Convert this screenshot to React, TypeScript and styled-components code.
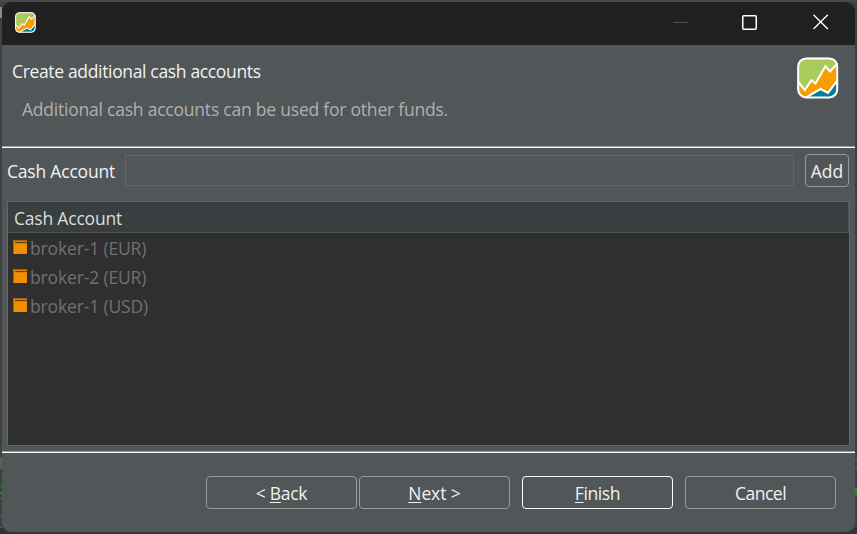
import React from "react";
import styled, { createGlobalStyle } from "styled-components";

const GlobalStyle = createGlobalStyle`
  * { box-sizing: border-box; }
  body { margin: 0; background: #404040; overflow: hidden; }
`;

/* Slivers of the windows behind the dialog show along its edges. */
const Desktop = styled.div`
  width: 857px;
  height: 534px;
  padding: 2px;
  background:
    linear-gradient(#8a8a8a, #8a8a8a) 0 7px / 2px 11px no-repeat,
    linear-gradient(#6b5a48, #6b5a48) 0 457px / 2px 12px no-repeat,
    linear-gradient(#1f8a2a, #1f8a2a) 0 486px / 2px 1px no-repeat,
    linear-gradient(#1f8a2a, #1f8a2a) 0 492px / 2px 2px no-repeat,
    linear-gradient(#1f8a2a, #1f8a2a) 0 498px / 2px 1px no-repeat,
    linear-gradient(#1f8a2a, #1f8a2a) 0 515px / 2px 1px no-repeat,
    linear-gradient(#1f8a2a, #1f8a2a) 0 527px / 2px 1px no-repeat,
    linear-gradient(#80684e, #80684e) 855px 460px / 2px 1px no-repeat,
    linear-gradient(#80684e, #80684e) 855px 468px / 2px 1px no-repeat,
    linear-gradient(#1f8a2a, #1f8a2a) 855px 488px / 2px 7px no-repeat,
    linear-gradient(#484848 0 2px, #404040 2px 528px, #353333 528px);
  font-family: "Open Sans", "Noto Sans", sans-serif;
  font-size: 17.5px;
  line-height: 24px;
  color: #f2f2f2;
`;

const Window = styled.main`
  width: 853px;
  height: 530px;
  display: flex;
  flex-direction: column;
  overflow: hidden;
  border-radius: 9px;
  background: #515658;
`;

const TitleBar = styled.header`
  flex: 0 0 43px;
  display: flex;
  align-items: center;
  justify-content: space-between;
  padding: 0 26px 3px 13px;
  background: #202020;
`;

const WindowControls = styled.div`
  display: flex;
  align-items: center;
  gap: 54px;
  svg:last-child { margin-left: 1px; }
`;

const Label = styled.span<{ $spacing?: number }>`
  display: inline-block;
  white-space: pre;
  letter-spacing: ${(p) => p.$spacing ?? -0.2}px;
`;

const Banner = styled.section`
  flex: 0 0 103px;
  display: flex;
  justify-content: space-between;
  padding: 12px 16px 0 10px;
  border-bottom: 1px solid #fff;
  box-shadow: inset 0 -1px #989a9b;
`;

const BannerText = styled.div`
  padding-top: 2px;
`;

const Title = styled.div`
  height: 24px;
`;

const Description = styled.div`
  margin: 14px 0 0 10px;
  color: #b0b0b0;
`;

const Content = styled.section`
  flex: 0 0 305px;
  padding: 6px 5px 0;
  border-bottom: 1px solid #fff;
  box-shadow: inset 0 -1px #989a9b;
`;

const Field = styled.label`
  display: flex;
  align-items: center;
  height: 33px;
`;

const FieldLabel = styled.span`
  width: 118px;
`;

const Input = styled.input`
  width: 669px;
  height: 31px;
  margin-right: 11px;
  border: 1px solid #646464;
  background: transparent;
  color: inherit;
  font: inherit;
  outline: none;
`;

const Button = styled.button<{ $width: number; $primary?: boolean }>`
  width: ${(p) => p.$width}px;
  height: 33px;
  padding: 0;
  border: 1px solid ${(p) => (p.$primary ? "#fff" : "#999")};
  border-radius: 4px;
  background: transparent;
  color: inherit;
  font: inherit;
  line-height: 24px;
`;

const Table = styled.div`
  width: 843px;
  height: 245px;
  margin-top: 14px;
  border: 1px solid #666;
  background: #2f2f2f;
`;

const TableHeader = styled.div`
  height: 31px;
  padding: 4px 0 0 6px;
  border-bottom: 1px solid #535353;
  border-right: 1px solid #535353;
  background: #393e40;
  color: #dcdcdc;
`;

const Row = styled.div`
  display: flex;
  align-items: center;
  height: 29px;
  padding-left: 5px;
  gap: 3px;
  color: #717171;
  svg { margin-top: -2px; }
`;

const Footer = styled.footer`
  display: flex;
  padding: 23px 0 0 204px;
`;

const Group = styled.div`
  display: flex;
  gap: 2px;
  margin-right: 12px;
  & + & { gap: 12px; }
`;

const Key = styled.span`
  text-decoration: underline;
  text-decoration-thickness: 1px;
  text-underline-offset: 2px;
  text-decoration-skip-ink: none;
`;

const Logo = ({ size }: { size: number }) => (
  <svg width={size} height={size} viewBox="0 0 42 42">
    <clipPath id={`tile${size}`}><rect x=".8" y=".8" width="40" height="40" rx="8" /></clipPath>
    <g clipPath={`url(#tile${size})`}>
      <path fill="#a9cb5d" d="M0 0h42v42H0z" />
      <path fill="#f79d00" stroke="#fff" strokeWidth="2.1" d="M0 23.5L7.8 33L14.5 23.2L18.5 26.5L28.4 9.3L33 14.5L42 5V44H0Z" />
      <path fill="#007d99" stroke="#fff" strokeWidth="2.1" d="M6 43L14 37.5L23.5 32L31 35.8L43 20V44Z" />
    </g>
    <rect x="1.2" y="1.4" width="39" height="39" rx="8" fill="none" stroke="#fff" strokeWidth="2" />
  </svg>
);

const AccountIcon = () => (
  <svg width="14" height="14" viewBox="0 0 14 14">
    <rect width="14" height="14" rx="1" fill="#f28e00" />
    <path d="M0.5 14V.5H14" fill="none" stroke="#a46307" />
    <path d="M2 2.5H14" stroke="#6c4308" strokeWidth="1.3" />
  </svg>
);

const accounts = ["broker-1 (EUR)", "broker-2 (EUR)", "broker-1 (USD)"];

export default function App() {
  return (
    <>
      <GlobalStyle />
      <Desktop>
        <Window>
          <TitleBar>
            <Logo size={21} />
            <WindowControls>
              <svg width="15" height="15"><path d="M0 7.5H15" stroke="#505050" /></svg>
              <svg width="15" height="15"><rect x=".75" y=".75" width="13.5" height="13.5" rx="1" fill="none" stroke="#fff" strokeWidth="1.5" /></svg>
              <svg width="17" height="16"><path d="M1.5 .7L15.8 15M15.8 .7L1.5 15" stroke="#fff" strokeWidth="1.3" /></svg>
            </WindowControls>
          </TitleBar>
          <Banner>
            <BannerText>
              <Title><Label $spacing={-0.34}>Create additional cash accounts</Label></Title>
              <Description><Label $spacing={-0.22}>Additional cash accounts can be used for other funds.</Label></Description>
            </BannerText>
            <Logo size={42} />
          </Banner>
          <Content>
            <Field>
              <FieldLabel><Label>Cash Account</Label></FieldLabel>
              <Input />
              <Button $width={44}><Label $spacing={0}>Add</Label></Button>
            </Field>
            <Table>
              <TableHeader><Label>Cash Account</Label></TableHeader>
              {accounts.map((name) => (
                <Row key={name}><AccountIcon /><Label $spacing={-0.15}>{name}</Label></Row>
              ))}
            </Table>
          </Content>
          <Footer>
            <Group>
              <Button $width={151}><Label $spacing={-0.3}>{"< "}<Key>B</Key>ack</Label></Button>
              <Button $width={151}><Label $spacing={-0.1}><Key>N</Key>{"ext >"}</Label></Button>
            </Group>
            <Group>
              <Button $width={151} $primary><Label $spacing={-0.4}><Key>F</Key>inish</Label></Button>
              <Button $width={151}><Label $spacing={-0.5}>Cancel</Label></Button>
            </Group>
          </Footer>
        </Window>
      </Desktop>
    </>
  );
}
